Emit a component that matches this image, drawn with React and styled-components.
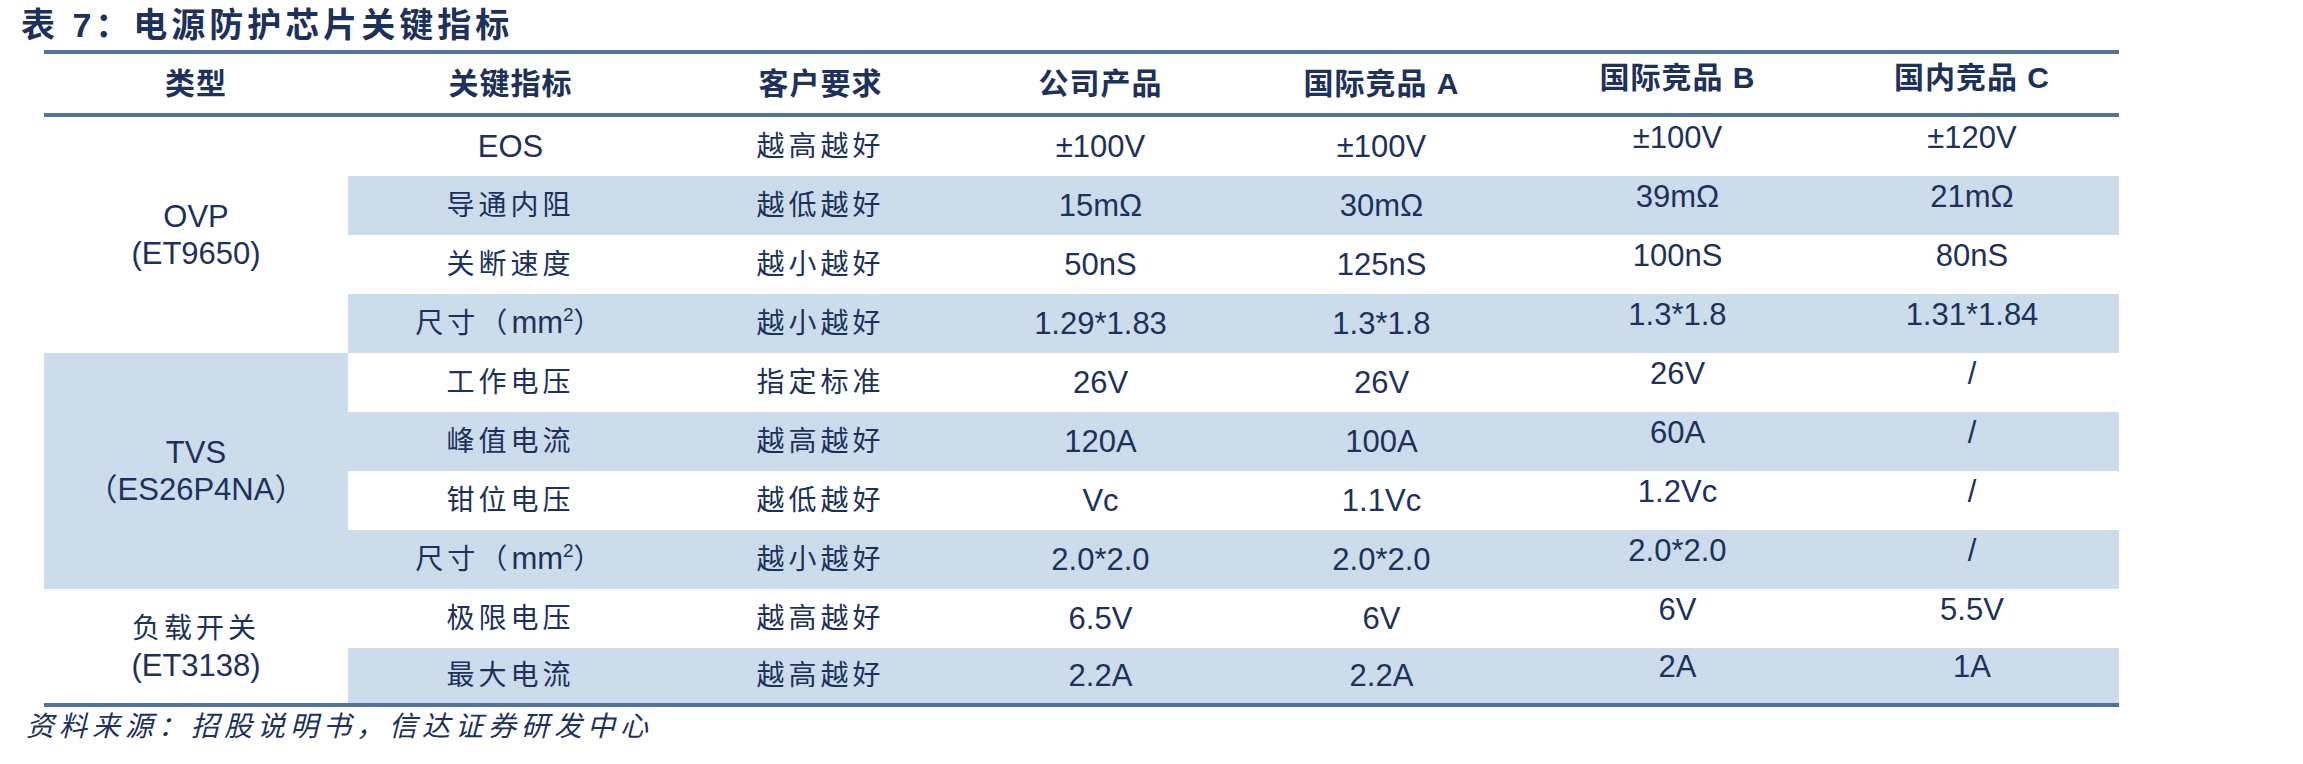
import React from "react";
import styled, {createGlobalStyle} from "styled-components";

const GlobalStyle = createGlobalStyle`
  html, body {
    margin: 0;
    padding: 0;
    background: #ffffff;
  }
`;

const ink = '#1c315c';
const shade = '#ccdcea';
const rule = '#50739a';

const Page = styled.div`
  width: 2303px;
  height: 764px;
  background: #ffffff;
  color: ${ink};
  font-family: "Liberation Sans", "Noto Sans CJK SC", sans-serif;
`;

const Title = styled.h1`
  margin: 0;
  padding-left: 21px;
  height: 50px;
  line-height: 50px;
  font-size: 34px;
  font-weight: 700;
  letter-spacing: 4px;
  white-space: nowrap;
`;

const Table = styled.table`
  margin-left: 44px;
  width: 2075px;
  table-layout: fixed;
  border-collapse: separate;
  border-spacing: 0;
`;

const HeadRow = styled.tr`
  height: 67px;
`;

const HeadCell = styled.th`
  padding: 0 0 ${({$lift}) => ($lift ? '12px' : '0')} 0;
  border-top: 4px solid ${rule};
  border-bottom: 4px solid ${rule};
  font-size: 30px;
  font-weight: 700;
  line-height: 36px;
  letter-spacing: 1px;
  text-align: center;
  vertical-align: middle;
  white-space: nowrap;
`;

const Row = styled.tr`
  height: 59px;
`;

const Cell = styled.td`
  padding: 0 0 ${({$lift}) => ($lift ? '17px' : '0')} 0;
  background: ${({$shaded}) => ($shaded ? shade : '#ffffff')};
  border-bottom: ${({$last}) => ($last ? `4px solid ${rule}` : 'none')};
  font-size: ${({$zh}) => ($zh ? '28px' : '31px')};
  letter-spacing: ${({$zh}) => ($zh ? '4px' : '0')};
  line-height: 36px;
  text-align: center;
  vertical-align: middle;
  white-space: nowrap;
`;

const TypeCell = styled(Cell)`
  line-height: 37px;
  font-size: 31px;
  letter-spacing: 0;
`;

const Zh = styled.span`
  font-size: 28px;
  letter-spacing: 4px;
`;

const Latin = styled.span`
  font-size: 31px;
  letter-spacing: 0;
`;

const Sup = styled.sup`
  font-size: 19px;
  line-height: 0;
  vertical-align: 12px;
`;

const Note = styled.p`
  margin: 0;
  padding-left: 26px;
  height: 40px;
  line-height: 40px;
  font-size: 28px;
  font-style: italic;
  letter-spacing: 5px;
  white-space: nowrap;
`;

const widths = [304, 325, 295, 265, 297, 295, 294];

const size = <>尺寸（<Latin>mm<Sup>2</Sup></Latin>）</>;

const rows = [
    {metric: 'EOS', zh: false, need: '越高越好', vals: ['±100V', '±100V', '±100V', '±120V']},
    {metric: '导通内阻', zh: true, need: '越低越好', vals: ['15mΩ', '30mΩ', '39mΩ', '21mΩ']},
    {metric: '关断速度', zh: true, need: '越小越好', vals: ['50nS', '125nS', '100nS', '80nS']},
    {metric: size, zh: true, need: '越小越好', vals: ['1.29*1.83', '1.3*1.8', '1.3*1.8', '1.31*1.84']},
    {metric: '工作电压', zh: true, need: '指定标准', vals: ['26V', '26V', '26V', '/']},
    {metric: '峰值电流', zh: true, need: '越高越好', vals: ['120A', '100A', '60A', '/']},
    {metric: '钳位电压', zh: true, need: '越低越好', vals: ['Vc', '1.1Vc', '1.2Vc', '/']},
    {metric: size, zh: true, need: '越小越好', vals: ['2.0*2.0', '2.0*2.0', '2.0*2.0', '/']},
    {metric: '极限电压', zh: true, need: '越高越好', vals: ['6.5V', '6V', '6V', '5.5V']},
    {metric: '最大电流', zh: true, need: '越高越好', vals: ['2.2A', '2.2A', '2A', '1A']},
];

const groups = {
    0: {span: 4, shaded: false, lines: ['OVP', '(ET9650)']},
    4: {span: 4, shaded: true, lines: ['TVS', '（ES26P4NA）']},
    8: {span: 2, shaded: false, lines: [<Zh key='z'>负载开关</Zh>, '(ET3138)']},
};

const App = () => {
    return (
        <Page>
            <GlobalStyle/>
            <Title>表 7：电源防护芯片关键指标</Title>
            <Table>
                <colgroup>
                    {widths.map((w, i) => <col key={i} style={{width: w}}/>)}
                </colgroup>
                <thead>
                    <HeadRow>
                        <HeadCell>类型</HeadCell>
                        <HeadCell>关键指标</HeadCell>
                        <HeadCell>客户要求</HeadCell>
                        <HeadCell>公司产品</HeadCell>
                        <HeadCell>国际竞品 A</HeadCell>
                        <HeadCell $lift>国际竞品 B</HeadCell>
                        <HeadCell $lift>国内竞品 C</HeadCell>
                    </HeadRow>
                </thead>
                <tbody>
                    {rows.map((r, i) => {
                        const shaded = i % 2 === 1;
                        const last = i === rows.length - 1;
                        const group = groups[i];
                        return (
                            <Row key={i}>
                                {group && (
                                    <TypeCell rowSpan={group.span} $shaded={group.shaded} $last={i + group.span === rows.length}>
                                        {group.lines[0]}<br/>{group.lines[1]}
                                    </TypeCell>
                                )}
                                <Cell $shaded={shaded} $last={last} $zh={r.zh}>{r.metric}</Cell>
                                <Cell $shaded={shaded} $last={last} $zh>{r.need}</Cell>
                                <Cell $shaded={shaded} $last={last}>{r.vals[0]}</Cell>
                                <Cell $shaded={shaded} $last={last}>{r.vals[1]}</Cell>
                                <Cell $shaded={shaded} $last={last} $lift>{r.vals[2]}</Cell>
                                <Cell $shaded={shaded} $last={last} $lift>{r.vals[3]}</Cell>
                            </Row>
                        );
                    })}
                </tbody>
            </Table>
            <Note>资料来源：招股说明书，信达证券研发中心</Note>
        </Page>
    );
}

export default App;
